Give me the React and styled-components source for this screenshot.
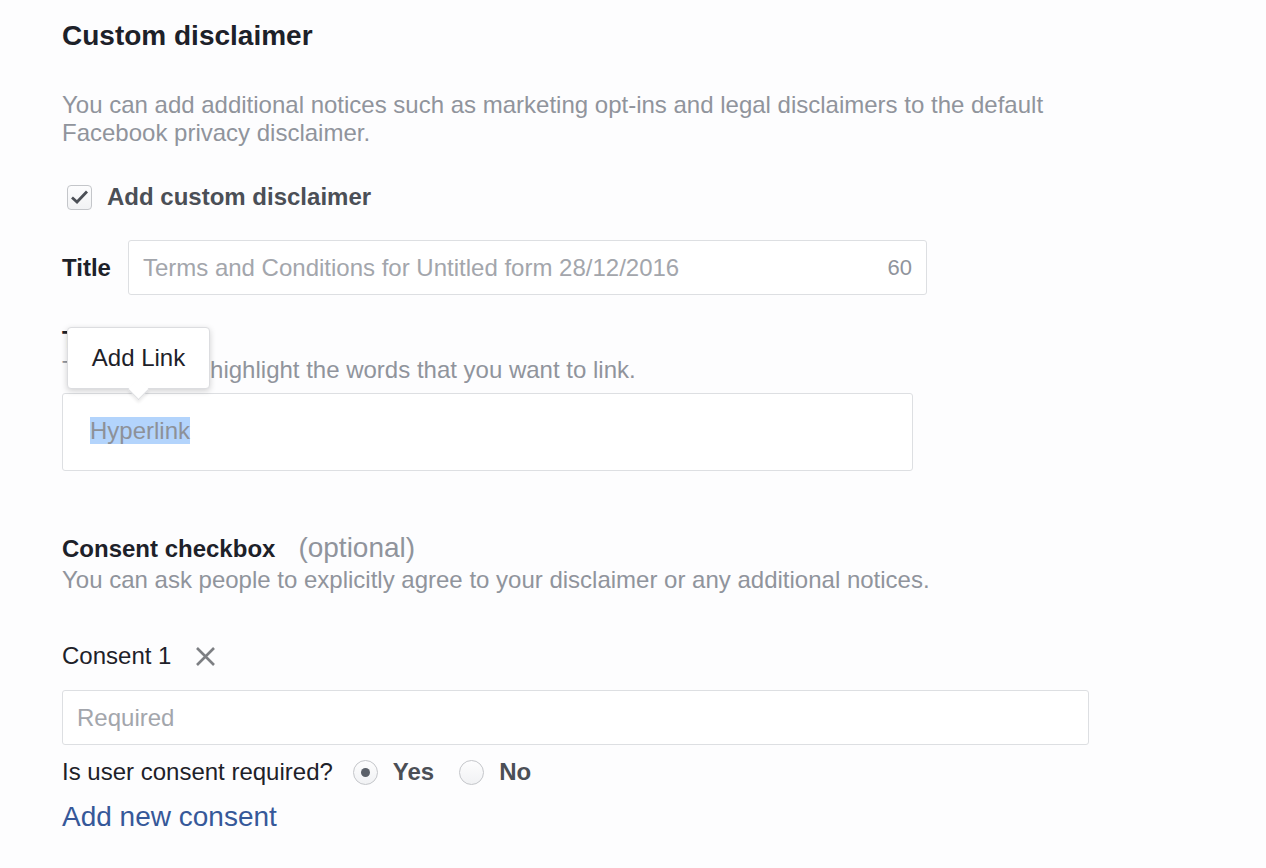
import React from 'react';
import styled, { createGlobalStyle } from 'styled-components';

const GlobalStyle = createGlobalStyle`
  html, body {
    margin: 0;
    padding: 0;
    background: #fdfdfe;
    font-family: "Liberation Sans", Arial, Helvetica, sans-serif;
  }
`;

const Page = styled.div`
  padding: 20px 0 40px 62px;
  color: #1d2129;
`;

const Heading = styled.h2`
  margin: 0;
  font-size: 28px;
  line-height: 32px;
  font-weight: bold;
  color: #1d2129;
`;

const Muted = styled.p`
  margin: ${(p) => p.$mt || 0}px 0 0;
  font-size: 24px;
  line-height: 28px;
  color: #90949c;
  max-width: 1000px;
`;

const CheckRow = styled.label`
  display: flex;
  align-items: center;
  gap: 15px;
  margin-top: 36px;
  padding-left: 5px;
  height: 28px;
  font-size: 24px;
  font-weight: bold;
  color: #4b4f56;
`;

const CheckBox = styled.span`
  width: 25px;
  height: 25px;
  box-sizing: border-box;
  border: 1px solid #c4c6ca;
  border-radius: 4px;
  background: linear-gradient(#fdfdfe, #f1f2f4);
  display: flex;
  align-items: center;
  justify-content: center;
`;

const FieldRow = styled.div`
  display: flex;
  align-items: center;
  gap: 17px;
  margin-top: 29px;
`;

const Label = styled.span`
  font-size: 24px;
  line-height: 28px;
  font-weight: ${(p) => (p.$bold ? 'bold' : 'normal')};
  color: #1d2129;
`;

const InputBox = styled.div`
  box-sizing: border-box;
  width: ${(p) => p.$w}px;
  height: 55px;
  border: 1px solid #dddfe2;
  border-radius: 3px;
  background: #fff;
  display: flex;
  align-items: center;
  justify-content: space-between;
  padding: 0 14px;
  font-size: 24px;
  color: #a3a6ac;
`;

const Counter = styled.span`
  color: #90949c;
  font-size: 22px;
`;

const TextSection = styled.div`
  position: relative;
  margin-top: 31px;
`;

const TextArea = styled.div`
  box-sizing: border-box;
  width: 851px;
  height: 78px;
  margin-top: 9px;
  border: 1px solid #dddfe2;
  border-radius: 3px;
  background: #fff;
  padding: 23px 27px;
  font-size: 24px;
  line-height: 28px;
  color: #8d9198;
`;

const Selected = styled.span`
  background: #b3d4fc;
`;

const Tooltip = styled.div`
  position: absolute;
  top: 1px;
  left: 5px;
  width: 143px;
  height: 62px;
  box-sizing: border-box;
  background: #fff;
  border: 1px solid #dcdde0;
  border-radius: 4px;
  box-shadow: 0 2px 6px rgba(0, 0, 0, 0.18);
  display: flex;
  align-items: center;
  justify-content: center;
  font-size: 24px;
  color: #1d2129;

  &::after {
    content: '';
    position: absolute;
    left: 63px;
    bottom: -9px;
    width: 14px;
    height: 14px;
    background: #fff;
    border-right: 1px solid #dcdde0;
    border-bottom: 1px solid #dcdde0;
    transform: rotate(45deg);
    box-shadow: 2px 2px 3px rgba(0, 0, 0, 0.08);
  }
`;

const SubHeading = styled.div`
  margin-top: 61px;
  display: flex;
  align-items: baseline;
  gap: 23px;
  line-height: 32px;
`;

const Optional = styled.span`
  font-size: 28px;
  color: #90949c;
`;

const ConsentHead = styled.div`
  display: flex;
  align-items: center;
  gap: 24px;
  margin-top: 48px;
`;

const RemoveButton = styled.button`
  border: 0;
  background: none;
  padding: 0;
  display: flex;
  cursor: pointer;
`;

const ConsentInput = styled(InputBox)`
  margin-top: 20px;
`;

const RadioRow = styled.div`
  display: flex;
  align-items: center;
  margin-top: 13px;
  height: 28px;
  font-size: 24px;
  color: #1d2129;
`;

const Radio = styled.span`
  width: 25px;
  height: 25px;
  box-sizing: border-box;
  border-radius: 50%;
  border: 1px solid #c4c6ca;
  background: linear-gradient(#fdfdfe, #f1f2f4);
  display: flex;
  align-items: center;
  justify-content: center;
  margin-left: ${(p) => p.$ml}px;

  &::after {
    content: '';
    display: ${(p) => (p.$checked ? 'block' : 'none')};
    width: 9px;
    height: 9px;
    border-radius: 50%;
    background: #5b6069;
  }
`;

const RadioText = styled.span`
  margin-left: 15px;
  font-weight: bold;
  color: #4b4f56;
`;

const AddLink = styled.a`
  display: block;
  margin-top: 15px;
  font-size: 28px;
  line-height: 32px;
  color: #365899;
  text-decoration: none;
  width: fit-content;
`;

const App = () => (
  <>
    <GlobalStyle />
    <Page>
      <Heading>Custom disclaimer</Heading>
      <Muted $mt={39}>
        You can add additional notices such as marketing opt-ins and legal disclaimers to the default
        Facebook privacy disclaimer.
      </Muted>

      <CheckRow>
        <CheckBox>
          <svg width="19" height="16" viewBox="0 0 19 16">
            <path d="M2 8.5 L7 13 L17 2.5" fill="none" stroke="#4b4f56" strokeWidth="2.8" />
          </svg>
        </CheckBox>
        Add custom disclaimer
      </CheckRow>

      <FieldRow>
        <Label $bold>Title</Label>
        <InputBox $w={799}>
          <span>Terms and Conditions for Untitled form 28/12/2016</span>
          <Counter>60</Counter>
        </InputBox>
      </FieldRow>

      <TextSection>
        <Label $bold>Text</Label>
        <Muted $mt={2}>To add a link, highlight the words that you want to link.</Muted>
        <TextArea>
          <Selected>Hyperlink</Selected>
        </TextArea>
        <Tooltip>Add Link</Tooltip>
      </TextSection>

      <SubHeading>
        <Label $bold>Consent checkbox</Label>
        <Optional>(optional)</Optional>
      </SubHeading>
      <Muted $mt={2}>
        You can ask people to explicitly agree to your disclaimer or any additional notices.
      </Muted>

      <ConsentHead>
        <Label>Consent 1</Label>
        <RemoveButton aria-label="Remove consent">
          <svg width="21" height="21" viewBox="0 0 21 21">
            <path d="M2 2 L19 19 M19 2 L2 19" stroke="#7d7f83" strokeWidth="2.6" />
          </svg>
        </RemoveButton>
      </ConsentHead>
      <ConsentInput $w={1027}>
        <span>Required</span>
      </ConsentInput>

      <RadioRow>
        <span>Is user consent required?</span>
        <Radio $checked $ml={20} />
        <RadioText>Yes</RadioText>
        <Radio $ml={25} />
        <RadioText>No</RadioText>
      </RadioRow>

      <AddLink href="#">Add new consent</AddLink>
    </Page>
  </>
);

export default App;
